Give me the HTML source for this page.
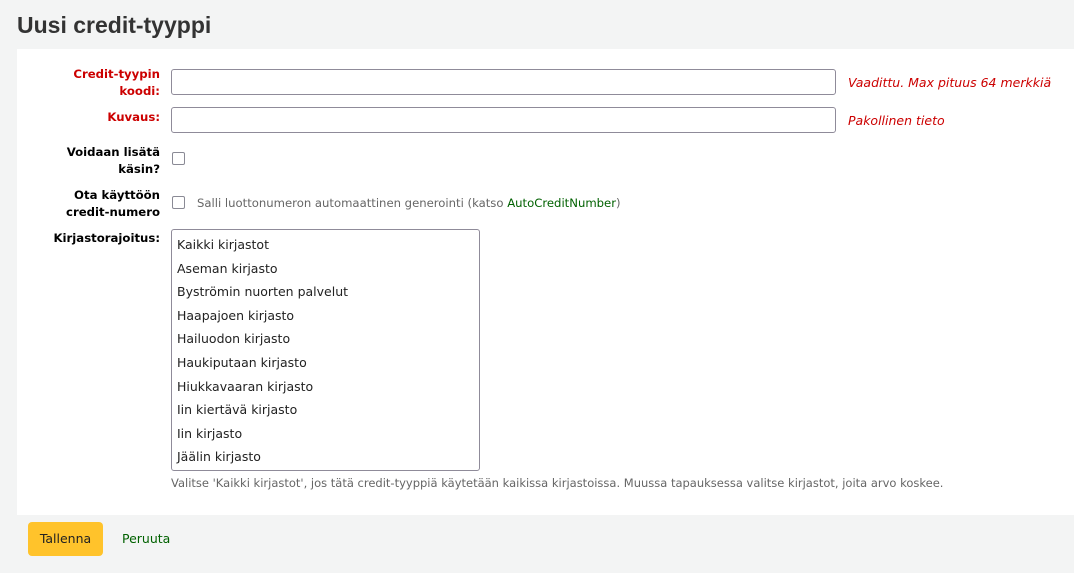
<!DOCTYPE html><html><head><style>
body{margin:0;background:#f3f4f4;font-family:"DejaVu Sans","Liberation Sans",sans-serif;width:1074px;height:573px;position:relative;overflow:hidden;color:#000}
.a{position:absolute;white-space:nowrap}
h1{position:absolute;left:17px;top:12px;margin:0;font-family:"Liberation Sans",sans-serif;font-size:23px;font-weight:bold;color:#333}
.panel{position:absolute;left:17px;top:49px;width:1057px;height:466px;background:#fff}
.lbl{position:absolute;right:914px;text-align:right;font-size:11.7px;font-weight:bold;line-height:17px}
.req{color:#c00}
.inp{position:absolute;left:171px;width:663px;height:24px;border:1px solid #8f8b99;border-radius:3px;background:#fff}
.hint{position:absolute;left:848px;font-size:12.5px;font-style:italic;color:#c00;white-space:nowrap}
.cb{position:absolute;left:172px;width:11px;height:11px;border:1.5px solid #8a8a95;border-radius:2px}
.sel{position:absolute;left:171px;top:229px;border:1px solid #8f8b99;border-radius:3px;font-size:12.5px;color:#222;padding-top:3px;box-sizing:border-box;height:242px;width:309px}
.sel div{height:23.6px;line-height:23.6px;padding-left:5px}
.btn{position:absolute;left:28px;top:522px;width:75px;height:34px;background:#ffc32b;border-radius:4px;font-size:12.5px;color:#222;text-align:center;line-height:34px}
</style></head><body>
<h1>Uusi credit-tyyppi</h1>
<div class="panel"></div>
<div class="lbl req" style="top:66px">Credit-tyypin<br>koodi:</div>
<div class="inp" style="top:69px"></div>
<div class="hint" style="top:75px">Vaadittu. Max pituus 64 merkkiä</div>
<div class="lbl req" style="top:109px">Kuvaus:</div>
<div class="inp" style="top:107px"></div>
<div class="hint" style="top:113px">Pakollinen tieto</div>
<div class="lbl" style="top:144px">Voidaan lisätä<br>käsin?</div>
<div class="cb" style="top:152px"></div>
<div class="lbl" style="top:187px">Ota käyttöön<br>credit-numero</div>
<div class="cb" style="top:196px"></div>
<div class="a" style="left:197px;top:196px;font-size:11.65px;color:#666">Salli luottonumeron automaattinen generointi (katso <span style="color:#006100">AutoCreditNumber</span>)</div>
<div class="lbl" style="top:230px">Kirjastorajoitus:</div>
<div class="sel"><div>Kaikki kirjastot</div><div>Aseman kirjasto</div><div>Byströmin nuorten palvelut</div><div>Haapajoen kirjasto</div><div>Hailuodon kirjasto</div><div>Haukiputaan kirjasto</div><div>Hiukkavaaran kirjasto</div><div>Iin kiertävä kirjasto</div><div>Iin kirjasto</div><div>Jäälin kirjasto</div></div>
<div class="a" style="left:171px;top:476px;font-size:11.5px;color:#666">Valitse 'Kaikki kirjastot', jos tätä credit-tyyppiä käytetään kaikissa kirjastoissa. Muussa tapauksessa valitse kirjastot, joita arvo koskee.</div>
<div class="btn">Tallenna</div>
<div class="a" style="left:122px;top:531px;font-size:12.5px;color:#006100">Peruuta</div>
</body></html>
